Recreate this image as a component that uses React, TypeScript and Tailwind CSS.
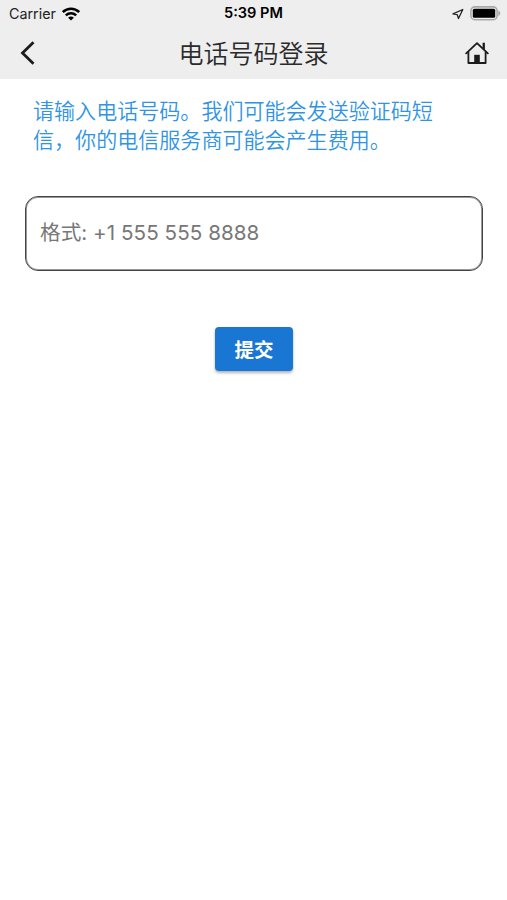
function WifiIcon() {
  return (
    <svg className="h-[14px] w-[18px]" viewBox="0 0 18 14" fill="none" stroke="#000" strokeWidth="2.6">
      <path d="M0.8 5.1C5.5.7 12.5.7 17.2 5.1" />
      <path d="M3.8 8.4C6.8 5.6 11.2 5.6 14.2 8.4" />
      <path d="M6.1 10.7C7.8 9.2 10.2 9.2 11.9 10.7L9 13.6Z" fill="#000" stroke="none" />
    </svg>
  )
}

function LocationIcon() {
  return (
    <svg className="h-3 w-3" viewBox="0 0 12 12" fill="none" stroke="#222" strokeWidth="1.3" strokeLinejoin="round">
      <path d="M10.8 1.5L1 5.9L5.2 6.6L6.5 10.5Z" />
    </svg>
  )
}

function BatteryIcon() {
  return (
    <svg className="h-[15px] w-[31px]" viewBox="0 0 31 15">
      <rect x="0.9" y="0.9" width="26.2" height="12.8" rx="4" fill="#ededed" stroke="#a9a9a9" strokeWidth="1.6" />
      <rect x="2.8" y="2.8" width="22.4" height="9" rx="1.5" fill="#000" />
      <path d="M28.3 4.6V10C31 9 31 5.6 28.3 4.6Z" fill="#a9a9a9" />
    </svg>
  )
}

function BackIcon() {
  return (
    <svg className="h-6 w-4" viewBox="0 0 16 24" fill="none" stroke="#1c1c1c" strokeWidth="2.8">
      <path d="M14.5 1.2L3.5 12L14.5 22.8" />
    </svg>
  )
}

function HomeIcon() {
  return (
    <svg className="h-6 w-6" viewBox="0 0 24 24" fill="none" stroke="#1c1c1c" strokeWidth="1.8">
      <path d="M1.2 12.4L12 2.2L22.8 12.4" strokeLinecap="round" strokeLinejoin="round" />
      <path d="M3.4 10.8V22H20.6V10.8" strokeLinejoin="round" />
      <path d="M17.6 1.8H19.9V9.2L17.6 7Z" fill="#1c1c1c" stroke="none" />
      <path d="M9.2 22.3V13.8H14.8V22.3Z" fill="#1c1c1c" stroke="none" />
    </svg>
  )
}

function StatusBar() {
  return (
    <div className="grid h-[27px] grid-cols-3 items-center pr-[6px] pl-[9px] font-['Inter','Liberation_Sans',sans-serif] text-[14px] text-[#222]">
      <div className="flex items-center gap-[6px]">
        <span className="text-[14.3px]">Carrier</span>
        <WifiIcon />
      </div>
      <span className="pr-[3px] text-center text-[14.6px] font-semibold whitespace-nowrap text-black">5:39 PM</span>
      <div className="flex items-center justify-end gap-[6px]">
        <LocationIcon />
        <BatteryIcon />
      </div>
    </div>
  )
}

export default function App() {
  return (
    <div className="min-h-[900px] w-full bg-white font-['Noto_Sans_CJK_SC',sans-serif]">
      <header className="h-[79px] bg-[#eeeeee]">
        <StatusBar />
        <div className="flex h-[51px] items-center justify-between pr-[18px] pl-[19px]">
          <button aria-label="返回" className="w-[23px]">
            <BackIcon />
          </button>
          <h1 className="text-[25px] leading-none font-[350] text-[#2a2a2a]">电话号码登录</h1>
          <button aria-label="首页">
            <HomeIcon />
          </button>
        </div>
      </header>

      <main className="flex flex-col items-center pr-6 pl-[25px] pt-[17px]">
        <p className="w-full px-2 text-[21.05px] leading-[29px] font-[350] text-[#2f94e4]">
          请输入电话号码。我们可能会发送验证码短
          <br />
          信，你的电信服务商可能会产生费用。
        </p>
        <input
          type="tel"
          placeholder="格式: +1 555 555 8888"
          className="mt-[42px] h-[75px] w-full rounded-[13px] border border-[#444] px-[14px] pb-[3px] font-['Inter','Noto_Sans_CJK_SC',sans-serif] text-[20.6px] tracking-[0.05px] shadow-[inset_0_0_0_1px_rgba(0,0,0,0.4)] placeholder:text-[#777] focus:outline-none"
        />
        <button className="mt-[56px] h-11 w-[78px] rounded-[4px] bg-[#1976d2] text-[19.5px] font-bold text-white shadow-[0_2px_3px_rgba(0,0,0,0.3)]">
          提交
        </button>
      </main>
    </div>
  )
}
